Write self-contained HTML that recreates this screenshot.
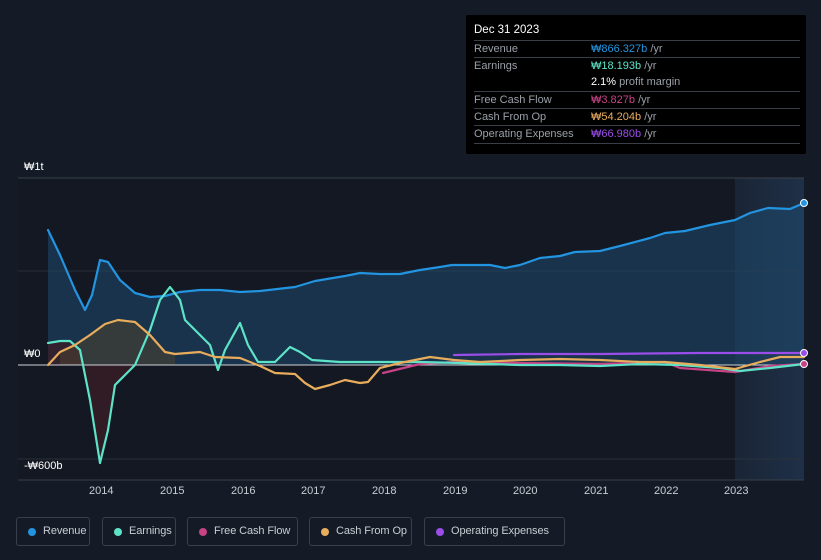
<!DOCTYPE html>
<html><head><meta charset="utf-8"><style>
body{margin:0;width:821px;height:560px;background:#151b26;font-family:"Liberation Sans",sans-serif;overflow:hidden;position:relative}
.tt{position:absolute;left:466px;top:15px;width:340px;height:139px;background:#000;border-radius:2px;font-size:11px;color:#9aa0a8}
.tt .h{position:absolute;left:8px;top:9px;color:#fff;font-size:11.5px}
.row{position:absolute;left:8px;width:326px;border-top:1px solid #3a3f47;height:17px;line-height:17px}
.row span{position:absolute;left:117px}
.lg{position:absolute;top:517px;height:29px;border:1px solid #3a3f4a;border-radius:3px;font-size:11px;color:#c8ccd2;line-height:27px;box-sizing:border-box;white-space:nowrap;letter-spacing:-0.1px}
.lg i{position:absolute;left:11px;top:10px;width:8px;height:8px;border-radius:50%}
.lg b{font-weight:normal;position:absolute;left:26px}
.ax{position:absolute;font-size:11px;color:#fff}
</style></head><body>
<svg width="821" height="560" style="position:absolute;left:0;top:0">
<defs><linearGradient id="g" x1="0" x2="1"><stop offset="0" stop-color="#1a2535"/><stop offset="1" stop-color="#1e3048"/></linearGradient></defs>
<rect x="18" y="178" width="786" height="302" fill="#131822"/>
<rect x="735" y="178" width="69" height="302" fill="url(#g)"/>
<line x1="18" y1="178" x2="804" y2="178" stroke="#3a404a"/>
<line x1="18" y1="271" x2="804" y2="271" stroke="#2a303a"/>
<line x1="18" y1="459" x2="804" y2="459" stroke="#2a303a"/>
<line x1="18" y1="480" x2="804" y2="480" stroke="#3a404a"/>
<path d="M48,230 L60,255 L75,290 L85,310 L92,295 L100,260 L108,262 L120,280 L135,293 L150,297 L165,296 L180,292 L200,290 L220,290 L240,292 L260,291 L295,287 L315,281 L345,276 L360,273 L380,274 L400,274 L420,270 L440,267 L452,265 L490,265 L505,268 L520,265 L540,258 L560,256 L575,252 L600,251 L620,246 L650,238 L665,233 L685,231 L710,225 L735,220 L750,213 L768,208 L790,209 L804,203 L804,365 L48,365Z" fill="#1e4a6e" fill-opacity="0.55"/>
<path d="M48,343 L60,341 L70,341 L80,350 L90,400 L100,463 L108,430 L115,385 L125,375 L135,365 L48,365Z" fill="#3a1e28" fill-opacity="0.8"/>
<path d="M90,335 L105,324 L118,320 L135,322 L150,335 L165,352 L175,354 L175,365 L60,365 L60,352 L75,345Z" fill="#4a4030" fill-opacity="0.6"/>
<line x1="18" y1="365" x2="804" y2="365" stroke="#cfd3d8" stroke-width="1"/>
<g fill="none" stroke-width="2.2" stroke-linejoin="round" stroke-linecap="round">
<path stroke="#2394e0" d="M48,230 L60,255 L75,290 L85,310 L92,295 L100,260 L108,262 L120,280 L135,293 L150,297 L165,296 L180,292 L200,290 L220,290 L240,292 L260,291 L295,287 L315,281 L345,276 L360,273 L380,274 L400,274 L420,270 L440,267 L452,265 L490,265 L505,268 L520,265 L540,258 L560,256 L575,252 L600,251 L620,246 L650,238 L665,233 L685,231 L710,225 L735,220 L750,213 L768,208 L790,209 L804,203"/>
<path stroke="#9b4dea" d="M454,355 L520,354 L600,354 L700,353 L804,353"/>
<path stroke="#c74385" d="M383,373 L420,364 L454,362 L520,363 L600,364 L665,362 L680,368 L735,372 L770,366 L804,364"/>
<path stroke="#5de4c8" d="M48,343 L60,341 L70,341 L80,350 L90,400 L100,463 L108,430 L115,385 L125,375 L135,365 L150,330 L160,300 L170,287 L180,300 L185,320 L200,335 L210,345 L218,370 L225,350 L240,323 L248,345 L258,362 L275,362 L290,347 L300,352 L312,360 L340,362 L380,362 L420,362 L460,363 L520,365 L560,365 L600,366 L640,364 L680,365 L720,368 L740,371 L770,368 L804,364"/>
<path stroke="#e8ad5c" d="M48,365 L60,352 L75,345 L90,335 L105,324 L118,320 L135,322 L150,335 L165,352 L175,354 L200,352 L215,357 L240,358 L260,366 L275,373 L295,374 L305,383 L315,389 L330,385 L345,380 L360,383 L368,382 L380,368 L400,363 L430,357 L454,360 L480,362 L520,360 L560,359 L600,360 L640,362 L665,362 L700,365 L735,369 L760,362 L780,357 L804,357"/>
</g>
<circle cx="804" cy="203" r="3.5" fill="#2394e0" stroke="#fff"/>
<circle cx="804" cy="353" r="3.5" fill="#9b4dea" stroke="#fff"/>
<circle cx="804" cy="364" r="3.5" fill="#c74385" stroke="#fff"/>
</svg>
<div class="ax" style="left:24px;top:161px">₩1t</div>
<div class="ax" style="left:24px;top:348px">₩0</div>
<div class="ax" style="left:24px;top:460px">-₩600b</div>
<div class="ax" style="left:89px;top:485px;color:#c8ccd2">2014</div>
<div class="ax" style="left:160px;top:485px;color:#c8ccd2">2015</div>
<div class="ax" style="left:231px;top:485px;color:#c8ccd2">2016</div>
<div class="ax" style="left:301px;top:485px;color:#c8ccd2">2017</div>
<div class="ax" style="left:372px;top:485px;color:#c8ccd2">2018</div>
<div class="ax" style="left:443px;top:485px;color:#c8ccd2">2019</div>
<div class="ax" style="left:513px;top:485px;color:#c8ccd2">2020</div>
<div class="ax" style="left:584px;top:485px;color:#c8ccd2">2021</div>
<div class="ax" style="left:654px;top:485px;color:#c8ccd2">2022</div>
<div class="ax" style="left:724px;top:485px;color:#c8ccd2">2023</div>
<div class="tt">
<div class="h">Dec 31 2023</div>
<div class="row" style="top:25px">Revenue<span><font color="#2394e0">₩866.327b</font> /yr</span></div>
<div class="row" style="top:42px">Earnings<span><font color="#5de4c8">₩18.193b</font> /yr</span></div>
<div class="row" style="top:59px;border-top:none"><span><font color="#fff">2.1%</font> profit margin</span></div>
<div class="row" style="top:76px">Free Cash Flow<span><font color="#c74385">₩3.827b</font> /yr</span></div>
<div class="row" style="top:93px">Cash From Op<span><font color="#e8ad5c">₩54.204b</font> /yr</span></div>
<div class="row" style="top:110px">Operating Expenses<span><font color="#9b4dea">₩66.980b</font> /yr</span></div>
<div class="row" style="top:128px;height:0"></div>
</div>
<div class="lg" style="left:16px;width:74px"><i style="background:#2394e0"></i><b>Revenue</b></div>
<div class="lg" style="left:102px;width:74px"><i style="background:#5de4c8"></i><b>Earnings</b></div>
<div class="lg" style="left:187px;width:111px"><i style="background:#c74385"></i><b>Free Cash Flow</b></div>
<div class="lg" style="left:309px;width:103px"><i style="background:#e8ad5c"></i><b>Cash From Op</b></div>
<div class="lg" style="left:424px;width:141px"><i style="background:#9b4dea"></i><b>Operating Expenses</b></div>
</body></html>
